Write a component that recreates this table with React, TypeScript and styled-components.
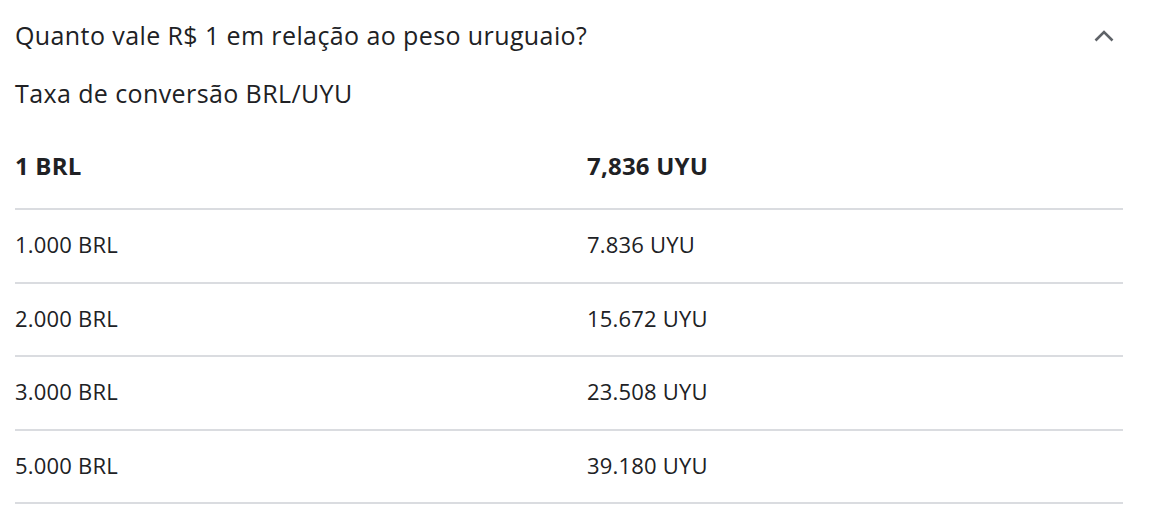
import React, { useState } from 'react';
import styled, { createGlobalStyle } from 'styled-components';

const GlobalStyle = createGlobalStyle`
  body {
    margin: 0;
    background: #fff;
    font-family: "Open Sans", Roboto, Arial, sans-serif;
    color: #202124;
  }
`;

const Wrapper = styled.div`
  width: 1108px;
  padding: 0 29px 0 15px;
`;

const Header = styled.div`
  display: flex;
  align-items: center;
  justify-content: space-between;
  height: 72px;
  cursor: pointer;
`;

const Question = styled.div`
  font-size: 25px;
  line-height: 32px;
  letter-spacing: 0.4px;
  margin-top: -2px;
`;

const Chevron = styled.svg`
  width: 24px;
  height: 24px;
  margin-right: 7.5px;
  fill: none;
  stroke: #5f6368;
  stroke-width: 2.6;
`;

const Subtitle = styled.div`
  font-size: 25px;
  line-height: 30px;
  letter-spacing: 0.4px;
  margin-top: 6px;
`;

const Table = styled.div``;

const Row = styled.div<{ head?: boolean }>`
  display: grid;
  grid-template-columns: 572px 1fr;
  align-items: center;
  height: ${(p) => (p.head ? '86px' : '68.5px')};
  padding: ${(p) => (p.head ? '14px 0 0' : '0 0 3px')};
  border-bottom: 2px solid #dadce0;
  font-size: ${(p) => (p.head ? '24px' : '22px')};
  font-weight: ${(p) => (p.head ? 700 : 400)};
  letter-spacing: ${(p) => (p.head ? '0.2px' : '0.2px')};
`;

const rows = [
  ['1.000 BRL', '7.836 UYU'],
  ['2.000 BRL', '15.672 UYU'],
  ['3.000 BRL', '23.508 UYU'],
  ['5.000 BRL', '39.180 UYU'],
];

function App() {
  const [open, setOpen] = useState(true);
  return (
    <Wrapper>
      <GlobalStyle />
      <Header onClick={() => setOpen(!open)}>
        <Question>Quanto vale R$ 1 em relação ao peso uruguaio?</Question>
        <Chevron viewBox="0 0 24 24">
          <polyline points="3.5,16.5 12,8 20.5,16.5" />
        </Chevron>
      </Header>
      {open && (
        <>
          <Subtitle>Taxa de conversão BRL/UYU</Subtitle>
          <Table>
            <Row head>
              <span>1 BRL</span>
              <span>7,836 UYU</span>
            </Row>
            {rows.map((r) => (
              <Row key={r[0]}>
                <span>{r[0]}</span>
                <span>{r[1]}</span>
              </Row>
            ))}
          </Table>
        </>
      )}
    </Wrapper>
  );
}

export default App;
